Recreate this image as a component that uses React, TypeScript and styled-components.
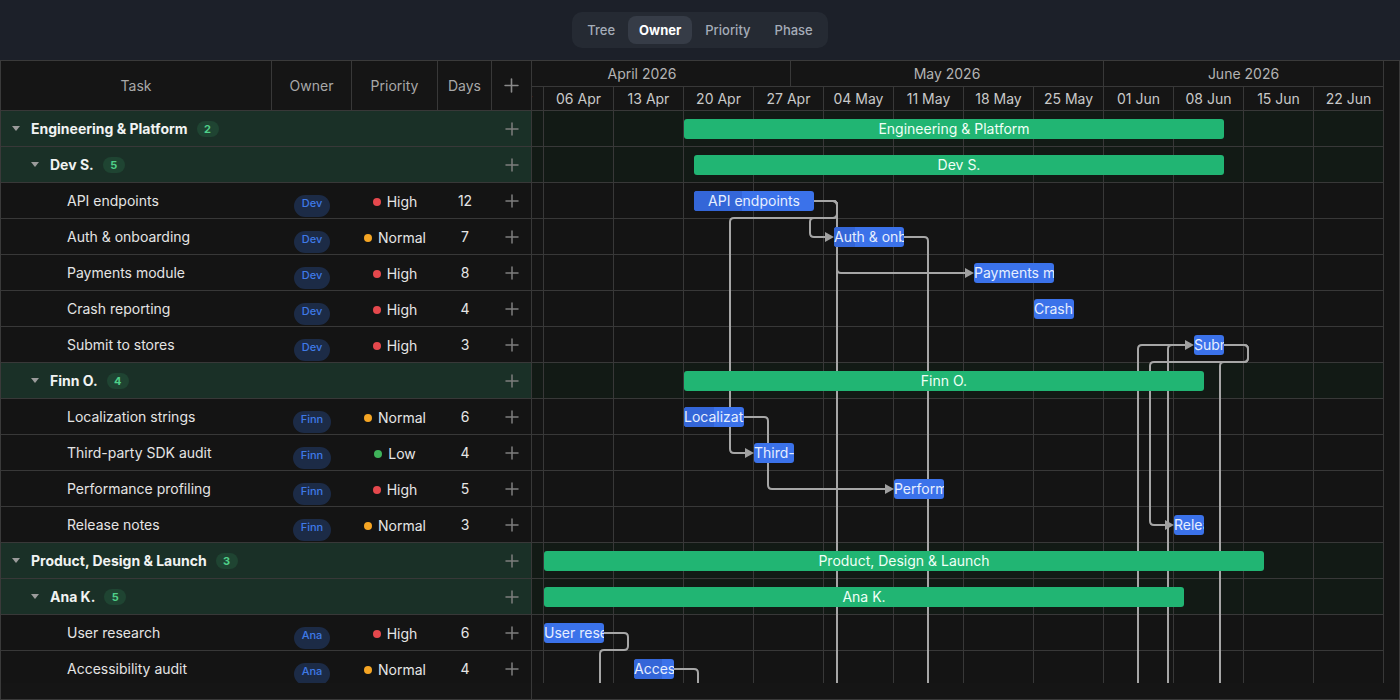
import React, { useLayoutEffect, useRef } from "react";
import styled, { createGlobalStyle } from "styled-components";

const GlobalStyle = createGlobalStyle`
  html, body { margin: 0; padding: 0; background: #151515; }
  body { font-family: Inter, "Noto Sans", "Liberation Sans", sans-serif; -webkit-font-smoothing: antialiased; }
  * { box-sizing: border-box; }
`;

type Priority = "High" | "Normal" | "Low";
type GroupRow = { kind: "group"; level: 0 | 1; name: string; count: number; start: number; days: number };
type TaskRow = { kind: "task"; name: string; owner: string; priority: Priority; days: number; start: number; progress: number };
type Row = GroupRow | TaskRow;

const rows: Row[] = [
  { kind: "group", level: 0, name: "Engineering & Platform", count: 2, start: 21, days: 54 },
  { kind: "group", level: 1, name: "Dev S.", count: 5, start: 22, days: 53 },
  { kind: "task", name: "API endpoints", owner: "Dev", priority: "High", days: 12, start: 22, progress: 40 },
  { kind: "task", name: "Auth & onboarding", owner: "Dev", priority: "Normal", days: 7, start: 36, progress: 30 },
  { kind: "task", name: "Payments module", owner: "Dev", priority: "High", days: 8, start: 50, progress: 0 },
  { kind: "task", name: "Crash reporting", owner: "Dev", priority: "High", days: 4, start: 56, progress: 0 },
  { kind: "task", name: "Submit to stores", owner: "Dev", priority: "High", days: 3, start: 72, progress: 0 },
  { kind: "group", level: 1, name: "Finn O.", count: 4, start: 21, days: 52 },
  { kind: "task", name: "Localization strings", owner: "Finn", priority: "Normal", days: 6, start: 21, progress: 50 },
  { kind: "task", name: "Third-party SDK audit", owner: "Finn", priority: "Low", days: 4, start: 28, progress: 0 },
  { kind: "task", name: "Performance profiling", owner: "Finn", priority: "High", days: 5, start: 42, progress: 0 },
  { kind: "task", name: "Release notes", owner: "Finn", priority: "Normal", days: 3, start: 70, progress: 0 },
  { kind: "group", level: 0, name: "Product, Design & Launch", count: 3, start: 7, days: 72 },
  { kind: "group", level: 1, name: "Ana K.", count: 5, start: 7, days: 64 },
  { kind: "task", name: "User research", owner: "Ana", priority: "High", days: 6, start: 7, progress: 0 },
  { kind: "task", name: "Accessibility audit", owner: "Ana", priority: "Normal", days: 4, start: 16, progress: 70 },
];

const months = [
  { label: "", w: 20 },
  { label: "April 2026", w: 297 },
  { label: "May 2026", w: 313 },
  { label: "June 2026", w: 280 },
];

const weeks = ["30 Mar", "06 Apr", "13 Apr", "20 Apr", "27 Apr", "04 May", "11 May", "18 May", "25 May", "01 Jun", "08 Jun", "15 Jun", "22 Jun"];

type Pt = [number, number];
const links: { pts: Pt[]; arrow?: Pt }[] = [
  { pts: [[340, 90], [363, 90], [363, 107], [336, 107], [336, 126], [352, 126]], arrow: [360, 126] },
  { pts: [[340, 90], [363, 90], [363, 107], [256, 107], [256, 342], [272, 342]], arrow: [280, 342] },
  { pts: [[340, 90], [363, 90], [363, 162], [492, 162]], arrow: [500, 162] },
  { pts: [[340, 90], [363, 90], [363, 640]] },
  { pts: [[430, 126], [454, 126], [454, 640]] },
  { pts: [[270, 306], [294, 306], [294, 378], [412, 378]], arrow: [420, 378] },
  { pts: [[750, 234], [774, 234], [774, 251], [676, 251], [676, 414], [692, 414]], arrow: [700, 414] },
  { pts: [[750, 234], [774, 234], [774, 251], [746, 251], [746, 640]] },
  { pts: [[664, 640], [664, 234], [712, 234]], arrow: [720, 234] },
  { pts: [[694, 640], [694, 234], [712, 234]] },
  { pts: [[130, 522], [154, 522], [154, 539], [126, 539], [126, 640]] },
  { pts: [[200, 558], [224, 558], [224, 640]] },
];

function roundedPath(points: Pt[], r = 4): string {
  let d = `M${points[0][0]} ${points[0][1]}`;
  for (let i = 1; i < points.length - 1; i++) {
    const [px, py] = points[i - 1];
    const [cx, cy] = points[i];
    const [nx, ny] = points[i + 1];
    const d1 = Math.hypot(cx - px, cy - py);
    const d2 = Math.hypot(nx - cx, ny - cy);
    const rr = Math.min(r, d1 / 2, d2 / 2);
    const ax = cx + ((px - cx) / d1) * rr;
    const ay = cy + ((py - cy) / d1) * rr;
    const bx = cx + ((nx - cx) / d2) * rr;
    const by = cy + ((ny - cy) / d2) * rr;
    d += ` L${ax} ${ay} Q${cx} ${cy} ${bx} ${by}`;
  }
  const last = points[points.length - 1];
  d += ` L${last[0]} ${last[1]}`;
  return d;
}

const LINE = "#383838";
const DAY = 10;
const CHART_W = 910;
const GUTTER = 15;

/* ---------- top bar ---------- */
const TopBar = styled.header`
  height: 60px;
  background: #1c2029;
  display: flex;
  align-items: center;
  justify-content: center;
`;

const Segmented = styled.div`
  display: flex;
  gap: 2px;
  padding: 4px;
  border-radius: 10px;
  background: #252a33;
`;

const SegButton = styled.button<{ $active?: boolean }>`
  height: 28px;
  padding: 0 11px;
  border: 0;
  border-radius: 8px;
  font-family: inherit;
  font-size: 13px;
  font-weight: ${(p) => (p.$active ? 700 : 500)};
  color: ${(p) => (p.$active ? "#ffffff" : "#a4acb8")};
  background: ${(p) => (p.$active ? "#363c47" : "transparent")};
  cursor: pointer;
`;

/* ---------- frame ---------- */
const Frame = styled.section`
  height: 640px;
  border: 1px solid #3a3a3a;
  background: #151515;
  display: flex;
`;

const LeftPane = styled.div`
  width: 531px;
  flex: none;
  border-right: 1px solid ${LINE};
  display: flex;
  flex-direction: column;
`;

const COLS = "271px 80px 86px 54px 39px";

const LeftHeader = styled.div`
  height: 50px;
  flex: none;
  display: grid;
  grid-template-columns: ${COLS};
  border-bottom: 1px solid ${LINE};
  background: #151515;
`;

const HeadCell = styled.div<{ $last?: boolean }>`
  display: flex;
  align-items: center;
  justify-content: center;
  font-size: 14px;
  color: #a8a8a8;
  border-right: ${(p) => (p.$last ? "0" : `1px solid ${LINE}`)};
`;

const Body = styled.div`
  height: 572px;
  flex: none;
  overflow: hidden;
  position: relative;
`;

const LeftRow = styled.div<{ $group: boolean }>`
  height: 36px;
  display: grid;
  grid-template-columns: ${COLS};
  border-bottom: 1px solid ${LINE};
  background: ${(p) => (p.$group ? "#1a3027" : "#141414")};
`;

const TaskCell = styled.div<{ $indent: number }>`
  display: flex;
  align-items: center;
  padding-left: ${(p) => p.$indent}px;
  min-width: 0;
`;

const Caret = styled.span`
  width: 16px;
  height: 16px;
  margin-right: 7px;
  display: inline-flex;
  align-items: center;
  justify-content: center;
  flex: none;
`;

const GroupName = styled.span`
  font-size: 14px;
  font-weight: 700;
  color: #f1f3f2;
  white-space: nowrap;
`;

const TaskName = styled.span`
  font-size: 14px;
  color: #e4e4e4;
  white-space: nowrap;
`;

const CountBadge = styled.span`
  margin-left: 9px;
  height: 16px;
  min-width: 22px;
  padding: 0 7px;
  border-radius: 8px;
  background: #1f4432;
  color: #4fd089;
  font-size: 11px;
  font-weight: 700;
  display: inline-flex;
  align-items: center;
  justify-content: center;
`;

const CenterCell = styled.div`
  display: flex;
  align-items: center;
  justify-content: center;
  font-size: 14px;
  color: #e6e6e6;
`;

const OwnerChip = styled.span`
  margin-top: 10px;
  padding: 2px 8px 7px;
  border-radius: 11px;
  background: #1c2b46;
  color: #3f7ae6;
  font-size: 11px;
  font-weight: 500;
  line-height: 13px;
`;

const PriorityTag = styled.span`
  display: inline-flex;
  align-items: center;
  gap: 6px;
  margin-top: 2px;
`;

const Dot = styled.span<{ $color: string }>`
  width: 8px;
  height: 8px;
  border-radius: 50%;
  background: ${(p) => p.$color};
`;

const Footer = styled.div`
  flex: 1;
  background: #151515;
`;

/* ---------- chart ---------- */
const ChartPane = styled.div`
  flex: 1;
  min-width: 0;
  overflow: hidden;
`;

const ChartInner = styled.div`
  width: ${CHART_W + GUTTER}px;
  padding-right: ${GUTTER}px;
`;

const MonthRow = styled.div`
  height: 26px;
  display: flex;
  border-bottom: 1px solid ${LINE};
  background: #151515;
`;

const MonthCell = styled.div<{ $w: number }>`
  width: ${(p) => p.$w}px;
  flex: none;
  border-right: 1px solid ${LINE};
  display: flex;
  align-items: center;
  justify-content: center;
  font-size: 14px;
  color: #b3b3b3;
  white-space: nowrap;
  overflow: hidden;
`;

const WeekRow = styled.div`
  height: 24px;
  display: flex;
  border-bottom: 1px solid ${LINE};
  background: #151515;
`;

const WeekCell = styled.div`
  width: ${7 * DAY}px;
  flex: none;
  border-right: 1px solid ${LINE};
  display: flex;
  align-items: center;
  justify-content: center;
  font-size: 14px;
  color: #c9c9c9;
  white-space: nowrap;
`;

const GridRow = styled.div<{ $group: boolean }>`
  height: 36px;
  border-bottom: 1px solid ${LINE};
  background-color: ${(p) => (p.$group ? "#121a15" : "#141414")};
  background-image: repeating-linear-gradient(
    to right,
    transparent 0,
    transparent ${7 * DAY - 1}px,
    ${LINE} ${7 * DAY - 1}px,
    ${LINE} ${7 * DAY}px
  );
`;

const LinkLayer = styled.svg`
  position: absolute;
  left: 0;
  top: 0;
  pointer-events: none;
`;

const BarLayer = styled.div`
  position: absolute;
  inset: 0;
`;

const BarTrack = styled.div`
  height: 36px;
  position: relative;
`;

const Bar = styled.div<{ $group: boolean }>`
  position: absolute;
  top: 8px;
  height: 20px;
  border-radius: 3px;
  overflow: hidden;
  white-space: nowrap;
  text-align: center;
  font-size: 14px;
  line-height: 20px;
  background: ${(p) => (p.$group ? "#21b573" : "#3b72ea")};
  color: ${(p) => (p.$group ? "#effff6" : "#e6eeff")};
`;

const Progress = styled.span`
  position: absolute;
  left: 0;
  top: 0;
  bottom: 0;
  background: #3466d8;
`;

const BarLabel = styled.span`
  position: relative;
`;

const priorityColor: Record<Priority, string> = {
  High: "#e5484d",
  Normal: "#f5a524",
  Low: "#3fb35a",
};

const PlusIcon = ({ color = "#7d7d7d", size = 14 }: { color?: string; size?: number }) => (
  <svg width={size} height={size} viewBox="0 0 14 14" fill="none">
    <path d="M7 1v12M1 7h12" stroke={color} strokeWidth="1.5" strokeLinecap="round" />
  </svg>
);

const CaretIcon = () => (
  <svg width="8" height="5" viewBox="0 0 8 5">
    <path d="M0 0H8L4 5Z" fill="#9b9b9b" />
  </svg>
);

export default function App() {
  const chartRef = useRef<HTMLDivElement>(null);
  useLayoutEffect(() => {
    if (chartRef.current) chartRef.current.scrollLeft = 58;
  }, []);

  return (
    <>
      <GlobalStyle />
      <TopBar>
        <Segmented>
          <SegButton>Tree</SegButton>
          <SegButton $active>Owner</SegButton>
          <SegButton>Priority</SegButton>
          <SegButton>Phase</SegButton>
        </Segmented>
      </TopBar>
      <Frame>
        <LeftPane>
          <LeftHeader>
            <HeadCell>Task</HeadCell>
            <HeadCell>Owner</HeadCell>
            <HeadCell>Priority</HeadCell>
            <HeadCell>Days</HeadCell>
            <HeadCell $last>
              <PlusIcon color="#8a8a8a" size={15} />
            </HeadCell>
          </LeftHeader>
          <Body>
            {rows.map((r, i) =>
              r.kind === "group" ? (
                <LeftRow key={i} $group>
                  <TaskCell $indent={r.level === 0 ? 7 : 26}>
                    <Caret>
                      <CaretIcon />
                    </Caret>
                    <GroupName>{r.name}</GroupName>
                    <CountBadge>{r.count}</CountBadge>
                  </TaskCell>
                  <CenterCell />
                  <CenterCell />
                  <CenterCell />
                  <CenterCell>
                    <PlusIcon />
                  </CenterCell>
                </LeftRow>
              ) : (
                <LeftRow key={i} $group={false}>
                  <TaskCell $indent={66}>
                    <TaskName>{r.name}</TaskName>
                  </TaskCell>
                  <CenterCell>
                    <OwnerChip>{r.owner}</OwnerChip>
                  </CenterCell>
                  <CenterCell>
                    <PriorityTag>
                      <Dot $color={priorityColor[r.priority]} />
                      {r.priority}
                    </PriorityTag>
                  </CenterCell>
                  <CenterCell>{r.days}</CenterCell>
                  <CenterCell>
                    <PlusIcon />
                  </CenterCell>
                </LeftRow>
              )
            )}
          </Body>
          <Footer />
        </LeftPane>
        <ChartPane ref={chartRef}>
          <ChartInner>
            <MonthRow>
              {months.map((m, i) => (
                <MonthCell key={i} $w={m.w}>
                  {m.label}
                </MonthCell>
              ))}
            </MonthRow>
            <WeekRow>
              {weeks.map((w) => (
                <WeekCell key={w}>{w}</WeekCell>
              ))}
            </WeekRow>
            <Body>
              {rows.map((r, i) => (
                <GridRow key={i} $group={r.kind === "group"} />
              ))}
              <LinkLayer width={CHART_W} height={660} viewBox={`0 0 ${CHART_W} 660`}>
                {links.map((l, i) => (
                  <path key={i} d={roundedPath(l.pts)} fill="none" stroke="#a6a6a6" strokeWidth={2} />
                ))}
                {links
                  .filter((l) => l.arrow)
                  .map((l, i) => {
                    const [x, y] = l.arrow as Pt;
                    return <path key={`a${i}`} d={`M${x - 9} ${y - 5}L${x} ${y}L${x - 9} ${y + 5}Z`} fill="#a0a0a0" />;
                  })}
              </LinkLayer>
              <BarLayer>
                {rows.map((r, i) => (
                  <BarTrack key={i}>
                    <Bar
                      $group={r.kind === "group"}
                      style={{ left: r.start * DAY, width: r.days * DAY }}
                    >
                      {r.kind === "task" && r.progress > 0 && <Progress style={{ width: `${r.progress}%` }} />}
                      <BarLabel>{r.name}</BarLabel>
                    </Bar>
                  </BarTrack>
                ))}
              </BarLayer>
            </Body>
          </ChartInner>
        </ChartPane>
      </Frame>
    </>
  );
}
